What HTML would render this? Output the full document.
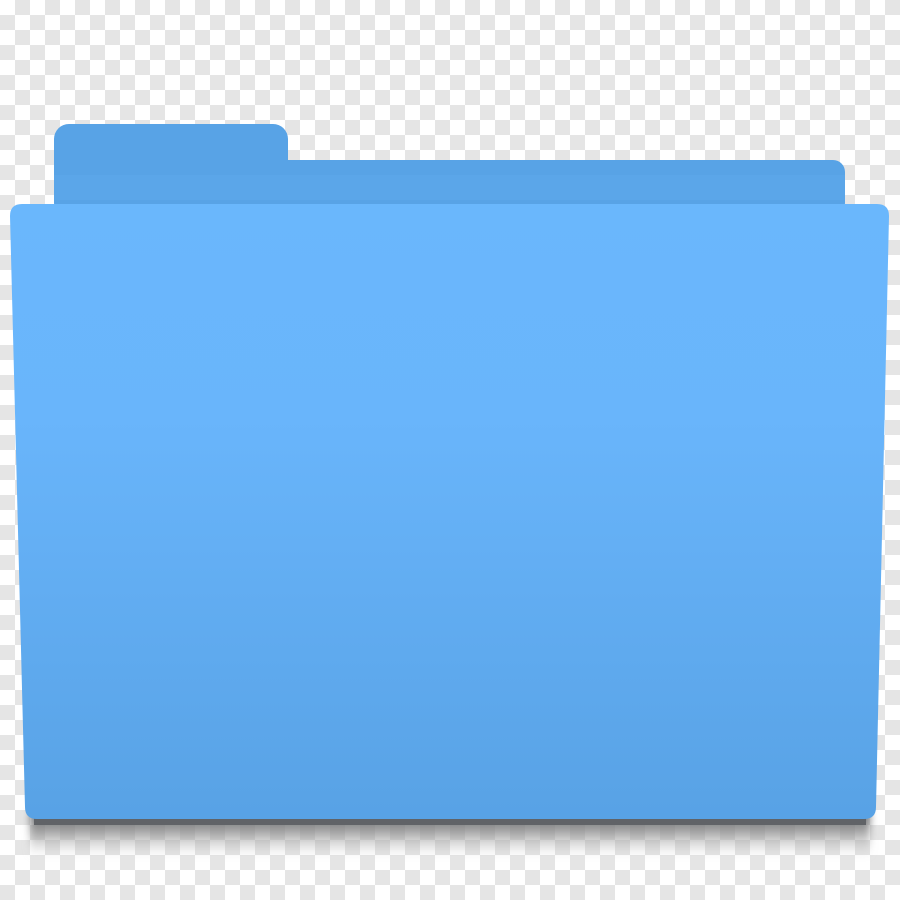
<!DOCTYPE html><html><head><style>html,body{margin:0;padding:0;width:900px;height:900px;overflow:hidden}</style></head><body>
<svg width="900" height="900" viewBox="0 0 900 900" xmlns="http://www.w3.org/2000/svg">
<defs>
<pattern id="ck" width="30" height="30" patternUnits="userSpaceOnUse">
<rect width="30" height="30" fill="#fff"/><rect x="15" width="15" height="15" fill="#e5e5e5"/><rect y="15" width="15" height="15" fill="#e5e5e5"/>
</pattern>
<linearGradient id="fg" x1="0" y1="0" x2="0" y2="1">
<stop offset="0" stop-color="#6ab7fc"/><stop offset="0.35" stop-color="#69b5fb"/><stop offset="1" stop-color="#58a2e5"/>
</linearGradient>
<linearGradient id="sh" x1="0" y1="0" x2="0" y2="1">
<stop offset="0" stop-color="#5f6266" stop-opacity="1"/><stop offset="0.4" stop-color="#8a8a8a" stop-opacity="0.8"/><stop offset="1" stop-color="#ccc" stop-opacity="0"/>
</linearGradient>
<filter id="bl"><feGaussianBlur stdDeviation="4"/></filter>
</defs>
<rect width="900" height="900" fill="url(#ck)"/>
<rect x="30" y="812" width="840" height="45" fill="url(#sh)" filter="url(#bl)"/>
<rect x="34" y="815" width="832" height="10" fill="#606367"/>
<rect x="54" y="124" width="234" height="90" rx="15" fill="#58a3e6"/>
<rect x="54" y="160" width="791" height="55" rx="12" fill="#58a3e6"/>
<rect x="54" y="175" width="791" height="25" fill="#5ea9eb" opacity="0.6"/>
<path d="M22 204 H877 Q889 204 889 216 L876 807 Q876 819 864 819 H37 Q25 819 25 807 L10 216 Q10 204 22 204 Z" fill="url(#fg)"/>
</svg>
</body></html>
